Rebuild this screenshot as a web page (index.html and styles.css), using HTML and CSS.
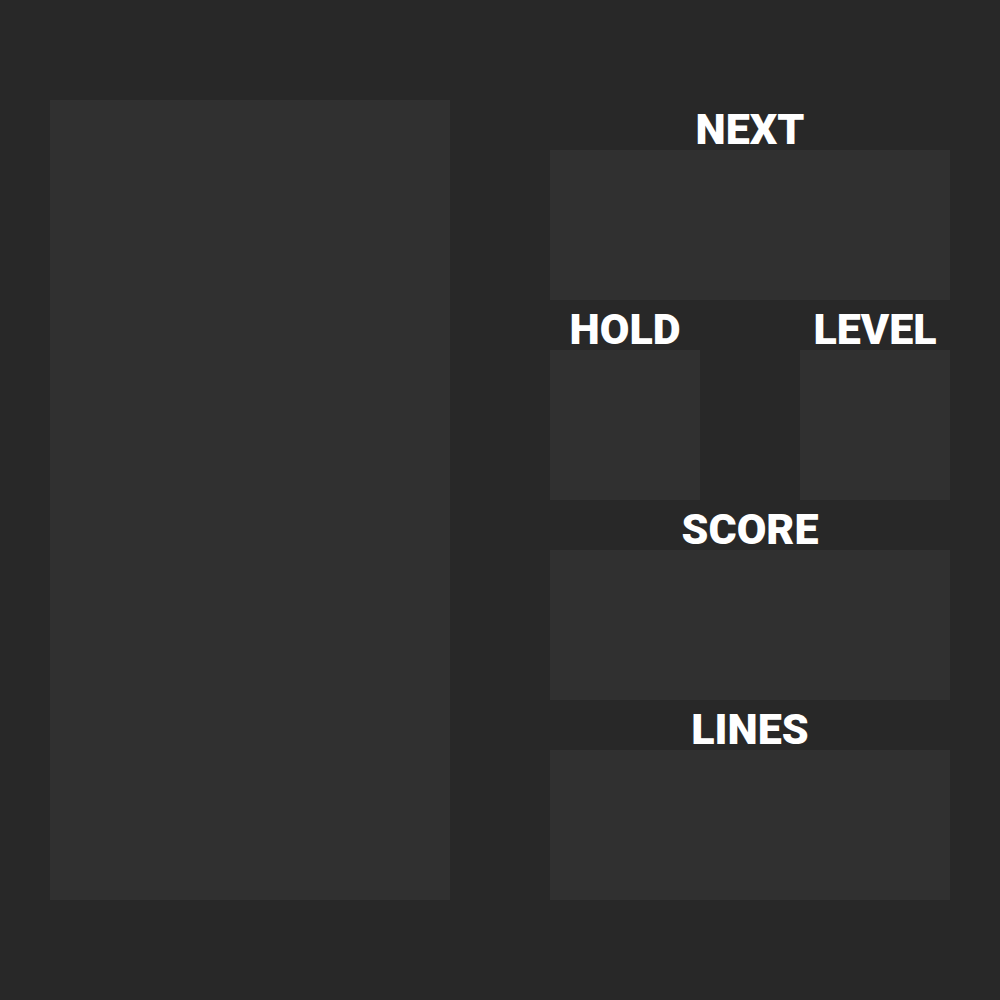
FILE: index.html
```html
<!DOCTYPE html>
<html lang="en">
<head>
<meta charset="utf-8">
<title>Block Game</title>
<link rel="stylesheet" href="styles.css">
</head>
<body>
<main class="game">
  <section class="board" aria-label="Playfield"></section>
  <aside class="sidebar">
    <section class="panel">
      <h2 class="label">NEXT</h2>
      <div class="box"></div>
    </section>
    <div class="row">
      <section class="panel">
        <h2 class="label">HOLD</h2>
        <div class="box"></div>
      </section>
      <section class="panel">
        <h2 class="label">LEVEL</h2>
        <div class="box"></div>
      </section>
    </div>
    <section class="panel">
      <h2 class="label">SCORE</h2>
      <div class="box"></div>
    </section>
    <section class="panel">
      <h2 class="label">LINES</h2>
      <div class="box"></div>
    </section>
  </aside>
</main>
</body>
</html>
```
FILE: styles.css
```css
* {
  box-sizing: border-box;
}

body {
  margin: 0;
  min-height: 100vh;
  background: #282828;
  color: #fff;
  font-family: Roboto, "Open Sans", sans-serif;
}

.game {
  display: grid;
  grid-template-columns: 1fr 1fr;
  gap: 100px;
  padding: 100px 5%;
}

.board,
.box {
  background: #303030;
}

.row {
  display: grid;
  grid-template-columns: 1fr 1fr;
  column-gap: 25%;
}

.label {
  margin: 0;
  padding-top: 8px;
  height: 50px;
  font-size: 43px;
  line-height: 42px;
  font-weight: 900;
  text-align: center;
  white-space: nowrap;
}

.box {
  height: 150px;
}
```
